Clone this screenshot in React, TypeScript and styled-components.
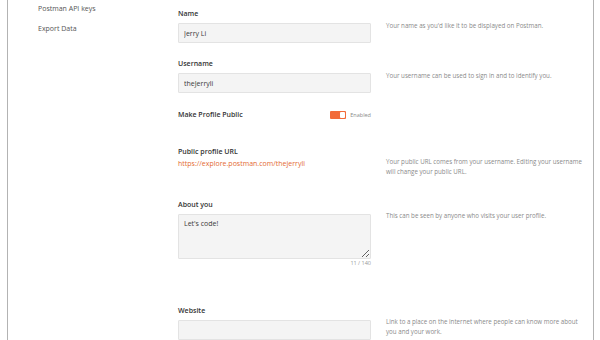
import styled, { createGlobalStyle } from "styled-components";

const GlobalStyle = createGlobalStyle`
  html, body {
    margin: 0;
    padding: 0;
    background: #ffffff;
    font-family: "Open Sans", "Liberation Sans", sans-serif;
  }
  * { box-sizing: border-box; }
`;

const Frame = styled.div`
  margin-left: 7px;
  width: 587px;
  height: 340px;
  border-left: 1px solid #b3b3b3;
  border-right: 1px solid #b3b3b3;
  overflow: hidden;
  display: grid;
  grid-template-columns: 170px 1fr;
`;

const Sidebar = styled.nav`
  display: flex;
  flex-direction: column;
  gap: 9px;
  padding: 3px 0 0 30px;
`;

const SideLink = styled.a`
  font-size: 7px;
  line-height: 11px;
  color: #555555;
  text-decoration: none;
`;

const Form = styled.div`
  display: flex;
  flex-direction: column;
  padding-top: 8px;
`;

const Row = styled.div<{ $top?: number }>`
  display: grid;
  grid-template-columns: 193px 198px;
  column-gap: 15px;
  align-items: start;
  margin-top: ${(p) => p.$top ?? 0}px;
`;

const Field = styled.div`
  display: flex;
  flex-direction: column;
`;

const Label = styled.label<{ $inline?: boolean }>`
  font-size: 7px;
  font-weight: 600;
  line-height: 12px;
  color: #333333;
  margin-bottom: ${(p) => (p.$inline ? 0 : 3)}px;
`;

const Input = styled.input`
  height: 20px;
  width: 100%;
  background: #f4f4f4;
  border: 1px solid #e3e3e3;
  border-radius: 1px;
  padding: 0 5px;
  font-family: inherit;
  font-size: 7px;
  color: #3a3a3a;
  outline: none;
`;

const TextArea = styled.textarea`
  height: 45px;
  width: 100%;
  background: #f4f4f4;
  border: 1px solid #e3e3e3;
  border-radius: 1px;
  padding: 4px 5px;
  font-family: inherit;
  font-size: 7px;
  line-height: 10px;
  color: #3a3a3a;
  outline: none;
  resize: vertical;
  display: block;
`;

const Counter = styled.span`
  align-self: flex-end;
  font-size: 5.5px;
  line-height: 9px;
  color: #999999;
`;

const Link = styled.a`
  font-size: 7px;
  line-height: 11px;
  color: #e46a32;
  text-decoration: none;
`;

const Help = styled.p<{ $top?: number }>`
  margin: 0;
  padding-top: ${(p) => p.$top ?? 13}px;
  font-size: 6.2px;
  line-height: 10px;
  color: #8a8a8a;
`;

const ToggleLine = styled.div`
  display: flex;
  align-items: center;
  justify-content: space-between;
`;

const ToggleGroup = styled.div`
  display: flex;
  align-items: center;
  gap: 4px;
`;

const Switch = styled.span<{ $on: boolean }>`
  width: 16px;
  height: 8px;
  border-radius: 1px;
  background: ${(p) => (p.$on ? "#f26b3a" : "#cccccc")};
  display: flex;
  align-items: center;
  justify-content: ${(p) => (p.$on ? "flex-end" : "flex-start")};
  padding: 1px;
`;

const Knob = styled.span`
  width: 5px;
  height: 6px;
  background: #ffffff;
  border-radius: 1px;
`;

const SwitchText = styled.span`
  font-size: 5.5px;
  color: #8a8a8a;
`;

export default function App() {
  return (
    <>
      <GlobalStyle />
      <Frame>
        <Sidebar>
          <SideLink href="#">Postman API keys</SideLink>
          <SideLink href="#">Export Data</SideLink>
        </Sidebar>
        <Form>
          <Row>
            <Field>
              <Label>Name</Label>
              <Input defaultValue="Jerry Li" />
            </Field>
            <Help>Your name as you'd like it to be displayed on Postman.</Help>
          </Row>
          <Row $top={15}>
            <Field>
              <Label>Username</Label>
              <Input defaultValue="theJerryli" />
            </Field>
            <Help>Your username can be used to sign in and to identify you.</Help>
          </Row>
          <Row $top={16}>
            <ToggleLine>
              <Label $inline>Make Profile Public</Label>
              <ToggleGroup>
                <Switch $on>
                  <Knob />
                </Switch>
                <SwitchText>Enabled</SwitchText>
              </ToggleGroup>
            </ToggleLine>
            <span />
          </Row>
          <Row $top={25}>
            <Field>
              <Label $inline>Public profile URL</Label>
              <Link href="#">https://explore.postman.com/thejerryli</Link>
            </Field>
            <Help $top={11}>
              Your public URL comes from your username. Editing your username will change your public URL.
            </Help>
          </Row>
          <Row $top={22}>
            <Field>
              <Label>About you</Label>
              <TextArea defaultValue="Let's code!" />
              <Counter>11 / 140</Counter>
            </Field>
            <Help $top={12}>This can be seen by anyone who visits your user profile.</Help>
          </Row>
          <Row $top={37}>
            <Field>
              <Label>Website</Label>
              <Input />
            </Field>
            <Help $top={12}>
              Link to a place on the internet where people can know more about you and your work.
            </Help>
          </Row>
        </Form>
      </Frame>
    </>
  );
}
